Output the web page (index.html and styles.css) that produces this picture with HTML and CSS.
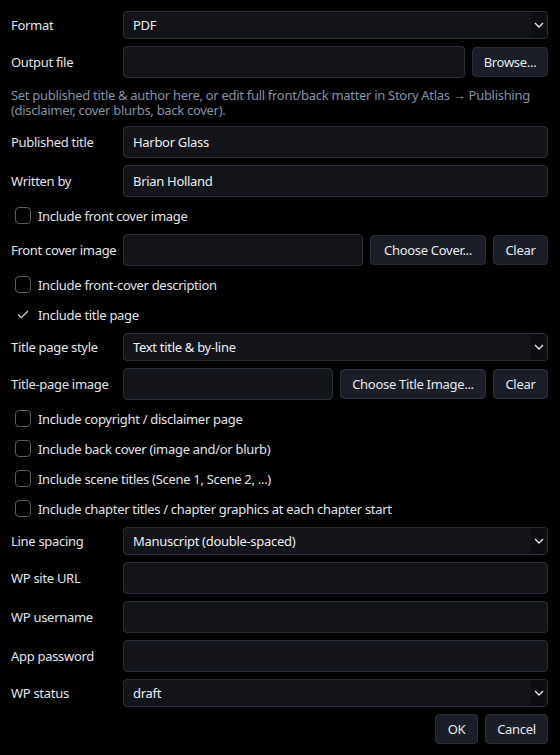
FILE: index.html
```html
<!DOCTYPE html>
<html>
<head>
<meta charset="utf-8">
<link rel="stylesheet" href="styles.css">
</head>
<body>
<div class="dialog">
  <div class="form">
    <label class="lbl">Format</label>
    <div class="select"><span>PDF</span><span class="arrow"><svg width="10" height="6" viewBox="0 0 10 6"><path d="M1 1l4 4 4-4" fill="none" stroke="#e8eaf0" stroke-width="1.3"/></svg></span></div>

    <label class="lbl">Output file</label>
    <div class="line"><div class="input"></div><button class="btn w-browse">Browse...</button></div>

    <p class="hint">Set published title &amp; author here, or edit full front/back matter in Story Atlas → Publishing (disclaimer, cover blurbs, back cover).</p>

    <label class="lbl">Published title</label>
    <div class="input">Harbor Glass</div>

    <label class="lbl">Written by</label>
    <div class="input">Brian Holland</div>

    <div class="check"><span class="box"></span>Include front cover image</div>

    <label class="lbl">Front cover image</label>
    <div class="line"><div class="input"></div><button class="btn w-cover">Choose Cover...</button><button class="btn w-clear">Clear</button></div>

    <div class="check"><span class="box"></span>Include front-cover description</div>

    <div class="check"><span class="tick"><svg width="12" height="9" viewBox="0 0 12 9"><path d="M1 4.5l3.2 3.2L11 1" fill="none" stroke="#d8dae0" stroke-width="1.2"/></svg></span>Include title page</div>

    <label class="lbl">Title page style</label>
    <div class="select"><span>Text title &amp; by-line</span><span class="arrow"><svg width="10" height="6" viewBox="0 0 10 6"><path d="M1 1l4 4 4-4" fill="none" stroke="#e8eaf0" stroke-width="1.3"/></svg></span></div>

    <label class="lbl">Title-page image</label>
    <div class="line"><div class="input"></div><button class="btn w-title">Choose Title Image...</button><button class="btn w-clear">Clear</button></div>

    <div class="check"><span class="box"></span>Include copyright / disclaimer page</div>
    <div class="check"><span class="box"></span>Include back cover (image and/or blurb)</div>
    <div class="check"><span class="box"></span>Include scene titles (Scene 1, Scene 2, ...)</div>
    <div class="check"><span class="box"></span>Include chapter titles / chapter graphics at each chapter start</div>

    <label class="lbl">Line spacing</label>
    <div class="select"><span>Manuscript (double-spaced)</span><span class="arrow"><svg width="10" height="6" viewBox="0 0 10 6"><path d="M1 1l4 4 4-4" fill="none" stroke="#e8eaf0" stroke-width="1.3"/></svg></span></div>

    <label class="lbl">WP site URL</label>
    <div class="input"></div>

    <label class="lbl">WP username</label>
    <div class="input"></div>

    <label class="lbl">App password</label>
    <div class="input"></div>

    <label class="lbl">WP status</label>
    <div class="select"><span>draft</span><span class="arrow"><svg width="10" height="6" viewBox="0 0 10 6"><path d="M1 1l4 4 4-4" fill="none" stroke="#e8eaf0" stroke-width="1.3"/></svg></span></div>
  </div>
  <div class="actions">
    <button class="btn w-ok">OK</button>
    <button class="btn w-cancel">Cancel</button>
  </div>
</div>
</body>
</html>
```

FILE: styles.css
```css
html, body {
  margin: 0;
  padding: 0;
  background: #000000;
}
body {
  font-family: "Noto Sans", "Open Sans", sans-serif;
  font-size: 13px;
  letter-spacing: -0.3px;
  color: #e6e8ee;
}
.dialog {
  padding: 11px 12px 0 11px;
}
.form {
  display: grid;
  grid-template-columns: 112px 1fr;
  row-gap: 7px;
  align-items: center;
}
.lbl {
  color: #e2e4ea;
  white-space: nowrap;
}
.input, .select {
  box-sizing: border-box;
  height: 32px;
  background: #12141a;
  border: 1px solid #2a2e39;
  border-radius: 4px;
  padding: 0 9px;
  display: flex;
  align-items: center;
  color: #eceef3;
}
.select {
  height: 28px;
  padding: 0 0 0 9px;
  justify-content: space-between;
  overflow: hidden;
}
.select .arrow {
  width: 16px;
  height: 100%;
  background: #0d0f14;
  display: flex;
  align-items: center;
  justify-content: center;
}
.line {
  display: flex;
  gap: 7px;
  align-items: center;
}
.line .input {
  flex: 1;
}
.btn {
  box-sizing: border-box;
  height: 30px;
  background: #1b1e27;
  border: 1px solid #2a2e39;
  border-radius: 4px;
  color: #e6e8ee;
  font-family: inherit;
  font-size: 13px;
  letter-spacing: -0.3px;
  padding: 0;
  white-space: nowrap;
  flex: none;
}
.w-browse { width: 76px; }
.w-cover { width: 116px; }
.w-title { width: 146px; }
.w-clear { width: 55px; }
.hint {
  grid-column: 1 / -1;
  margin: 3px 0 1px 0;
  color: #8690a6;
  line-height: 15px;
}
.check {
  grid-column: 1 / -1;
  height: 23px;
  display: flex;
  align-items: center;
  gap: 7px;
  padding-left: 4px;
  color: #e2e4ea;
}
.box {
  box-sizing: border-box;
  width: 16px;
  height: 17px;
  border: 1.5px solid #5a5d66;
  border-radius: 4px;
  flex: none;
}
.tick {
  width: 16px;
  height: 17px;
  display: flex;
  align-items: center;
  justify-content: center;
  flex: none;
}
.actions {
  display: flex;
  justify-content: flex-end;
  gap: 7px;
  margin-top: 7px;
}
.w-ok { width: 43px; }
.w-cancel { width: 63px; }
```
